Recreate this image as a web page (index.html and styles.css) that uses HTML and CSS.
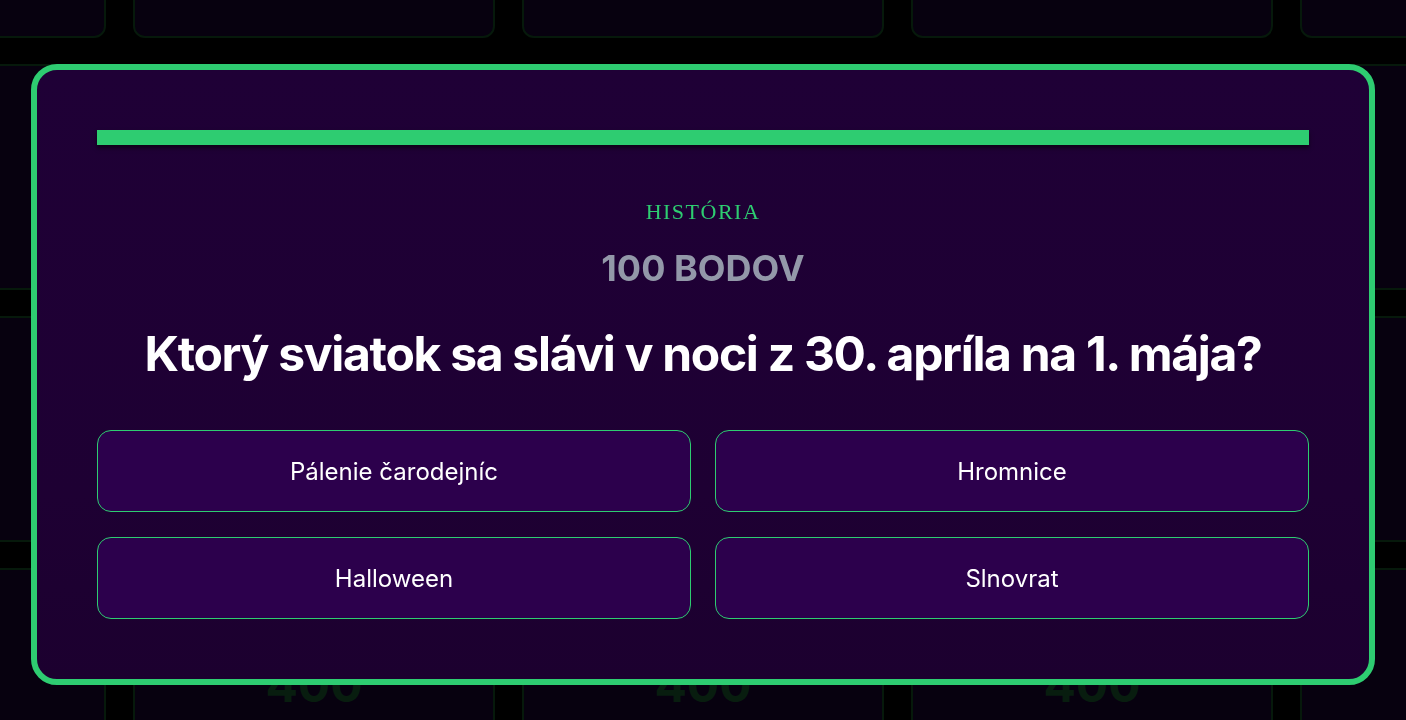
FILE: index.html
```html
<!DOCTYPE html>
<html lang="sk">
<head>
<meta charset="utf-8">
<title>Kvíz</title>
<link rel="stylesheet" href="styles.css">
</head>
<body>
<div class="board">
  <div class="tile">100</div><div class="tile">100</div><div class="tile">100</div><div class="tile">100</div><div class="tile">100</div>
  <div class="tile">200</div><div class="tile">200</div><div class="tile">200</div><div class="tile">200</div><div class="tile">200</div>
  <div class="tile">300</div><div class="tile">300</div><div class="tile">300</div><div class="tile">300</div><div class="tile">300</div>
  <div class="tile">400</div><div class="tile">400</div><div class="tile">400</div><div class="tile">400</div><div class="tile">400</div>
</div>
<div class="overlay">
  <div class="modal">
    <div class="timer"></div>
    <div class="category">História</div>
    <div class="points">100 BODOV</div>
    <h1 class="question">Ktorý sviatok sa slávi v noci z 30. apríla na 1. mája?</h1>
    <div class="answers">
      <button class="answer">Pálenie čarodejníc</button>
      <button class="answer">Hromnice</button>
      <button class="answer">Halloween</button>
      <button class="answer">Slnovrat</button>
    </div>
  </div>
</div>
</body>
</html>
```
FILE: styles.css
```css
html, body {
  margin: 0;
  padding: 0;
  background: #000;
  overflow: hidden;
  height: 720px;
  font-family: Inter, "Noto Sans", sans-serif;
}

.board {
  display: grid;
  grid-template-columns: repeat(5, 362px);
  grid-auto-rows: 226px;
  column-gap: 27px;
  row-gap: 26px;
  width: 1918px;
  margin-left: -256px;
  margin-top: -188px;
}

.tile {
  box-sizing: border-box;
  background: #07010f;
  border: 2px solid #06190b;
  border-radius: 12px;
  display: flex;
  align-items: center;
  justify-content: center;
  font-size: 48px;
  font-weight: 700;
  color: #081d0f;
  padding-top: 6px;
}

.overlay {
  position: fixed;
  inset: 0;
  display: flex;
  justify-content: center;
  align-items: flex-start;
  padding-top: 64px;
}

.modal {
  box-sizing: border-box;
  width: 1344px;
  border: 6px solid #2ecc71;
  border-radius: 26px;
  padding: 60px;
  background: linear-gradient(180deg, #1f0036 0%, #1e0033 70%, #1c002f 100%);
  text-align: center;
}

.timer {
  height: 15px;
  background: #2ecc71;
  box-shadow: 0 3px 4px rgba(0, 0, 0, 0.55);
}

.category {
  margin-top: 52px;
  font-family: "Liberation Serif", "DejaVu Serif", serif;
  font-size: 22px;
  line-height: 30px;
  letter-spacing: 1.5px;
  text-transform: uppercase;
  color: #2ecc71;
}

.points {
  margin-top: 19px;
  font-size: 36px;
  line-height: 44px;
  font-weight: 700;
  color: #9398a9;
}

.question {
  margin: 35px 0 0;
  font-size: 48px;
  line-height: 58px;
  font-weight: 700;
  letter-spacing: -1.3px;
  color: #ffffff;
}

.answers {
  margin-top: 47px;
  display: grid;
  grid-template-columns: 1fr 1fr;
  gap: 25px 24px;
}

.answer {
  height: 82px;
  box-sizing: border-box;
  background: #2c004c;
  border: 1px solid #2ecc71;
  border-radius: 14px;
  color: #ffffff;
  font-family: Inter, "Noto Sans", sans-serif;
  font-size: 24px;
  font-weight: 400;
  cursor: pointer;
}
```
